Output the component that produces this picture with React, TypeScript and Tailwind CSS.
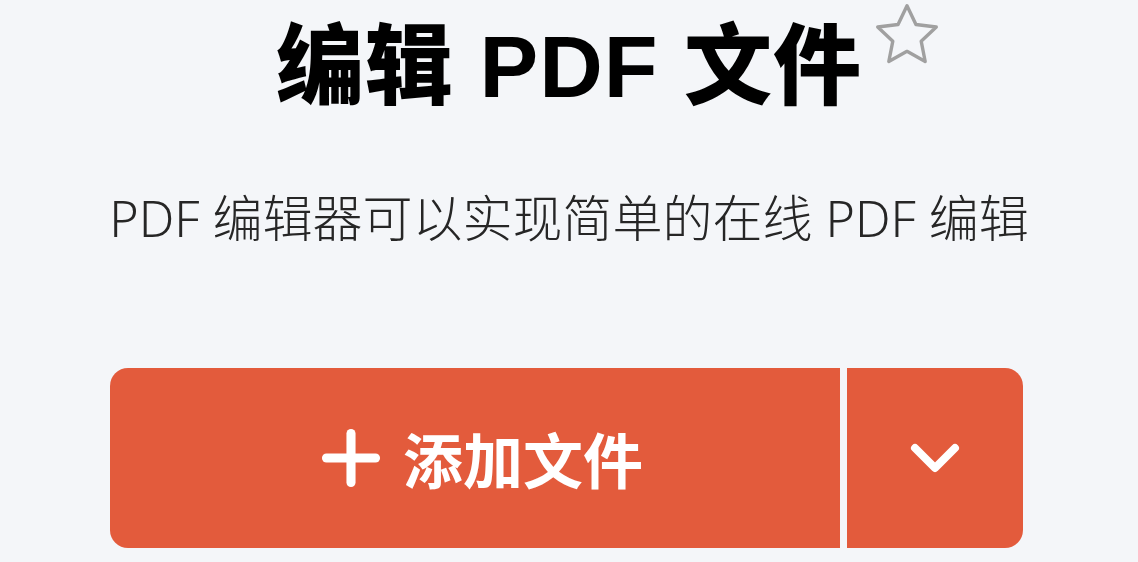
import React from 'react';
import { Plus, ChevronDown } from 'lucide-react';

export default function App() {
  return (
    <div className="w-[1138px] h-[562px] overflow-hidden bg-[#f4f6f9] flex flex-col items-center font-['Noto_Sans','Noto_Sans_CJK_SC',sans-serif]">
      {/* Title with favourite star */}
      <div className="relative mt-[4px]">
        <h1 className="text-[88px] leading-[126px] font-black text-black tracking-[1px] font-['Liberation_Sans','Noto_Sans_CJK_SC',sans-serif]">
          编辑 PDF 文件
        </h1>
        <svg
          className="absolute left-full ml-[8px] -top-[6px]"
          width="74"
          height="74"
          viewBox="0 0 24 24"
          fill="none"
          stroke="#a0a0a0"
          strokeWidth="1.1"
          strokeLinejoin="round"
        >
          <path d="M12 2.5l2.9 6.1 6.6.8-4.9 4.6 1.3 6.6L12 17.3l-5.9 3.3 1.3-6.6-4.9-4.6 6.6-.8z" />
        </svg>
      </div>

      {/* Subtitle */}
      <p className="mt-[58px] text-[50px] leading-[60px] font-light text-[#262626]">
        PDF 编辑器可以实现简单的在线 PDF 编辑
      </p>

      {/* Add-file split button */}
      <div className="mt-[120px] mr-[5px] flex gap-[7px]">
        <button className="w-[730px] h-[180px] pl-[14px] rounded-l-[18px] bg-[#e35b3c] flex items-center justify-center gap-[22px] text-white">
          <Plus size={84} strokeWidth={2.6} className="-mx-[12px]" />
          <span className="text-[60px] leading-none font-bold font-['Noto_Sans_CJK_SC',sans-serif]">添加文件</span>
        </button>
        <button className="w-[176px] h-[180px] rounded-r-[18px] bg-[#e35b3c] flex items-center justify-center text-white">
          <ChevronDown size={80} strokeWidth={2.4} />
        </button>
      </div>
    </div>
  );
}
